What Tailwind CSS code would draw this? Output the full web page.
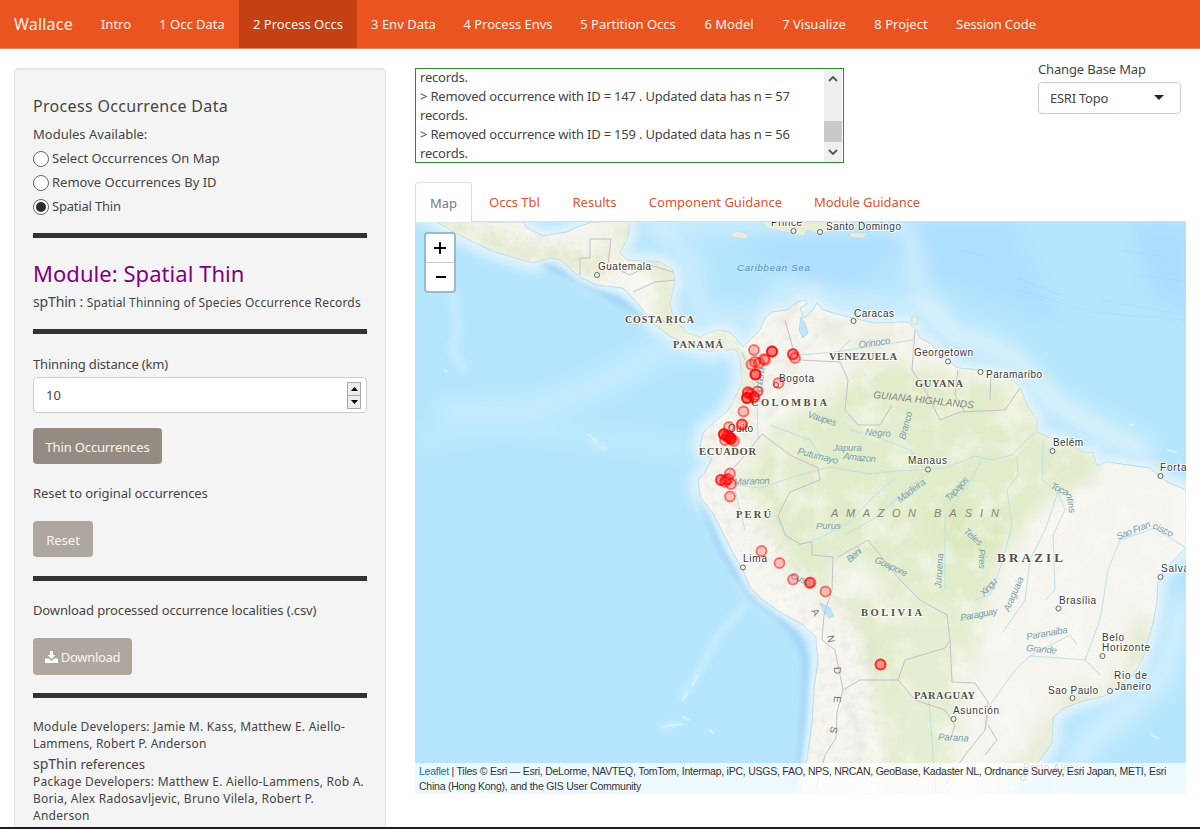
<!DOCTYPE html>
<html lang="en">
<head>
<meta charset="utf-8">
<title>Wallace</title>
<script src="https://cdn.jsdelivr.net/npm/@tailwindcss/browser@4"></script>
</head>
<body class="h-[829px] w-[1200px] overflow-hidden bg-white font-['Noto_Sans','Open_Sans',sans-serif] text-[13px] text-[#444]">
<div class="flex h-[829px] flex-col overflow-hidden border-b-2 border-[#1d1a20]">
<nav class="flex h-[49px] shrink-0 items-stretch border-b border-[#e5835d] bg-[#e95420] text-center leading-[49px] whitespace-nowrap text-[#fff1ea]">
  <a class="w-[87px] pl-[14px] text-left text-[16px] tracking-[0.2px]">Wallace</a>
  <a class="w-[58px]">Intro</a>
  <a class="w-[94px]">1 Occ Data</a>
  <a class="w-[118px] bg-[#c34113]">2 Process Occs</a>
  <a class="w-[93px]">3 Env Data</a>
  <a class="w-[116px]">4 Process Envs</a>
  <a class="w-[124px]">5 Partition Occs</a>
  <a class="w-[78px]">6 Model</a>
  <a class="w-[92px]">7 Visualize</a>
  <a class="w-[82px]">8 Project</a>
  <a class="w-[108px] tracking-[-0.1px]">Session Code</a>
</nav>
<main class="flex min-h-0 flex-1 pl-[14px]">
  <aside class="mt-[19px] w-[372px] shrink-0 overflow-hidden rounded-t border border-b-0 border-[#e3e3e3] bg-[#f4f4f4] px-[18px] pt-[27px] whitespace-nowrap shadow-[inset_0_1px_1px_rgba(0,0,0,0.05)]">
    <h4 class="h-5 text-[16px] leading-[21px] tracking-[0.32px]">Process Occurrence Data</h4>
    <div class="mt-[6px] h-6 leading-6">Modules Available:</div>
    <label class="flex h-6 items-center gap-[3px]"><span class="mt-px h-4 w-4 rounded-full border border-[#666] bg-white"></span><span class="pt-px">Select Occurrences On Map</span></label>
    <label class="flex h-6 items-center gap-[3px]"><span class="mt-px h-4 w-4 rounded-full border border-[#666] bg-white"></span><span class="pt-px">Remove Occurrences By ID</span></label>
    <label class="flex h-6 items-center gap-[3px]"><span class="mt-px flex h-4 w-4 items-center justify-center rounded-full border border-[#666] bg-white"><span class="h-[10px] w-[10px] rounded-full bg-[#2d2d2d]"></span></span><span class="pt-px tracking-[-0.2px]">Spatial Thin</span></label>
    <div class="mt-[15px] h-[5px] bg-[#333]"></div>
    <h3 class="mt-[22px] h-[27px] text-[22px] leading-[26px] tracking-[0.05px] text-[#800080]">Module: Spatial Thin</h3>
    <div class="mt-[5px] h-5 leading-5"><span class="text-[14px] tracking-[-0.15px]">spThin : </span><span class="text-[12px] tracking-[0.16px]">Spatial Thinning of Species Occurrence Records</span></div>
    <div class="mt-[17px] h-[5px] bg-[#333]"></div>
    <div class="mt-5 h-5 leading-5 tracking-[-0.18px]">Thinning distance (km)</div>
    <div class="mt-[3px] flex h-[36px] items-center justify-between rounded border border-[#ccc] bg-white pt-px pr-[5px] pl-[12px]">
      <span>10</span>
      <span class="flex h-[27px] w-[14px] flex-col border border-[#aaa] bg-[#ececec]">
        <span class="flex flex-1 items-center justify-center border-b border-[#aaa]"><svg width="7" height="4"><path d="M0 4 3.500 0 7 4z"/></svg></span>
        <span class="flex flex-1 items-center justify-center"><svg width="7" height="4"><path d="M0 0h7L3.500 4z"/></svg></span>
      </span>
    </div>
    <div class="mt-[15px] flex h-[36px] w-[129px] items-center justify-center rounded bg-[#948c82] pt-[3px] tracking-[-0.15px] text-[#f8f5ef]">Thin Occurrences</div>
    <div class="mt-5 h-5 leading-[19px] tracking-[-0.08px]">Reset to original occurrences</div>
    <div class="mt-[17px] flex h-[36px] w-[60px] items-center justify-center rounded bg-[#aea79f] pt-[3px] text-[#f8f5ef]">Reset</div>
    <div class="mt-[19px] h-[5px] bg-[#333]"></div>
    <div class="mt-5 h-5 leading-[19px] tracking-[-0.12px]">Download processed occurrence localities (.csv)</div>
    <div class="mt-[17px] flex h-[37px] w-[99px] items-center justify-center gap-[3px] rounded bg-[#aea79f] pt-[3px] tracking-[-0.3px] text-[#f8f5ef]"><svg class="-mt-[3px]" width="13" height="12" viewBox="0 0 13 12" fill="#fff"><path d="M5 0h3v4h2.500L6.500 8 2.500 4H5zM0 7.500h3.800L6.500 10l2.700-2.500H13V12H0z"/></svg>Download</div>
    <div class="mt-[18px] h-[5px] bg-[#333]"></div>
    <div class="mt-5 text-[12px] leading-[17.300px]"><span class="tracking-[0.24px]">Module Developers: Jamie M. Kass, Matthew E. Aiello-</span><br><span class="tracking-[0.14px]">Lammens, Robert P. Anderson</span></div>
    <div class="h-[20px] leading-[21px]"><span class="text-[14px]">spThin</span> references</div>
    <div class="text-[12px] leading-[17.300px] tracking-[0.24px]">Package Developers: Matthew E. Aiello-Lammens, Rob A.<br>Boria, Alex Radosavljevic, Bruno Vilela, Robert P.<br>Anderson</div>
  </aside>
  <section class="ml-[29px] flex w-[771px] flex-col whitespace-nowrap">
    <div class="flex h-[133px] shrink-0 items-start justify-between">
      <div class="mt-[19px] flex h-[95px] w-[429px] justify-between overflow-hidden border border-[#2a8a2a] pl-[4px]">
        <div class="-mt-px leading-[19px] tracking-[-0.2px]">records.<br>&gt; Removed occurrence with ID = 147 . Updated data has n = 57<br>records.<br>&gt; Removed occurrence with ID = 159 . Updated data has n = 56<br>records.</div>
        <div class="mr-px flex w-[18px] flex-col items-center bg-[#efefef]">
          <svg class="mt-[6px]" width="10" height="7" fill="none" stroke="#555" stroke-width="1.800"><path d="M1 6 5 2l4 4"/></svg>
          <span class="mt-[39px] h-[21px] w-[18px] bg-[#c9c9c9]"></span>
          <svg class="mt-[7px]" width="10" height="7" fill="none" stroke="#555" stroke-width="1.800"><path d="m1 1 4 4 4-4"/></svg>
        </div>
      </div>
      <div class="mt-[10px] w-[148px]">
        <div class="h-5 leading-5 tracking-[-0.15px]">Change Base Map</div>
        <div class="mt-[3px] flex h-[32px] w-[143px] items-center justify-between rounded border border-[#ccc] pt-px pr-[16px] pl-[11px]"><span class="pt-px tracking-[-0.25px]">ESRI Topo</span><svg class="-mt-[2px]" width="10" height="5"><path fill="#222" d="M0 0h10L5 5z"/></svg></div>
      </div>
    </div>
    <div class="flex h-[40px] shrink-0 border-b border-[#ddd] text-center leading-[41px] text-[#e0532a]">
      <a class="h-[40px] w-[57px] rounded-t border border-b-0 border-[#ddd] bg-white leading-[40px] text-[#777]">Map</a>
      <a class="w-[85px]">Occs Tbl</a>
      <a class="w-[75px]">Results</a>
      <a class="w-[167px]">Component Guidance</a>
      <a class="w-[136px] tracking-[-0.1px]">Module Guidance</a>
    </div>
    <div class="relative h-[572px] shrink-0 overflow-hidden">
      <svg class="block" width="771" height="572" viewBox="415 222 771 572" font-family="'Liberation Sans',sans-serif">
        <defs>
          <path id="land" d="M437 222 460 235 490 250 515 258 533 263 550 258 560 260 580 277 597 285 623 288 633 298 643 310 653 323 670 336 680 341 693 347 710 352 718 346 727 350 735 349 740 358 742 382 735 398 727 412 717 420 703 433 700 447 705 455 712 458 705 472 698 480 700 497 713 513 723 533 733 553 743 570 750 587 763 600 777 610 803 625 816 637 818 660 814 690 812 723 807 760 800 794H1000L1007 787 1040 760 1052 743 1053 718 1064 708 1080 702 1107 695 1133 675 1143 657 1153 623 1157 600 1158 580 1167 567 1186 547V490L1167 482 1150 468 1107 462 1097 466 1093 453 1083 452 1067 443 1048 437 1037 432 1037 420 1027 405 1020 387 1007 375 980 370 958 368 945 358 930 343 920 338 917 330 907 322 873 323 853 318 840 315 823 310 817 303 812 311 804 318 800 308 807 304 805 300 797 302 787 310 772 312 765 318 760 330 752 338 743 347 738 340 730 332 717 330 700 337 687 333 673 318 670 302 675 282 673 270 660 262 627 260 620 253 628 237 630 222H592L577 227 567 232 543 236 527 228 523 222Z"/>
          <clipPath id="c"><use href="#land"/></clipPath>
          <filter id="b3" x="-20%" y="-20%" width="140%" height="140%"><feGaussianBlur stdDeviation="3"/></filter>
          <filter id="b8" x="-50%" y="-50%" width="200%" height="200%"><feGaussianBlur stdDeviation="9"/></filter>
          <filter id="grain" x="0" y="0" width="100%" height="100%"><feTurbulence type="fractalNoise" baseFrequency=".035" numOctaves="5" seed="4"/><feColorMatrix values="0 0 0 0 .98  0 0 0 0 .975  0 0 0 0 .94  2.800 0 0 0 -1.250"/></filter>
          <filter id="relief" x="0" y="0" width="100%" height="100%"><feTurbulence type="fractalNoise" baseFrequency=".12" numOctaves="3" seed="8"/><feColorMatrix values="0 0 0 0 .66  0 0 0 0 .66  0 0 0 0 .62  2.500 0 0 0 -1.200"/></filter>
        </defs>
        <rect x="415" y="222" width="771" height="572" fill="#b6e6fd"/>
        <g filter="url(#b8)">
          <path d="M735 240 900 222H1010L1060 320 960 290 890 250 850 292 800 282Z" fill="#addffe"/>
          <path d="M1130 222h60v100l-40-30z" fill="#abddfe"/>
          <path d="M650 222 900 222 915 250 920 310 850 300 790 285 755 320 700 315 690 260Z" fill="none" stroke="#d3eefc" stroke-width="14"/>
          <path d="M745 350 670 345 600 385 530 410 440 412" fill="none" stroke="#c9edfd" stroke-width="18"/>
          <path d="M700 450 620 440 500 425 415 440" fill="none" stroke="#beE9fd" stroke-width="12"/>
          <path d="M1186 600 1160 680 1090 740 1060 794" fill="none" stroke="#cfeefd" stroke-width="26"/>
          <path d="M925 300 950 335 990 345 1020 365 1050 400 1100 430 1150 455" fill="none" stroke="#d9f1fb" stroke-width="24"/>
        </g>
        <use href="#land" fill="none" stroke="#d0edfc" stroke-width="22" filter="url(#b3)"/>
        <path d="M540 260C580 285 610 292 650 320M700 492C710 530 730 570 755 600C790 625 804 640 806 665C806 700 803 740 795 794" fill="none" stroke="#9ed2f7" stroke-width="7" filter="url(#b3)"/>
        <use href="#land" fill="none" stroke="#e2f4fb" stroke-width="8" filter="url(#b3)"/>
        <g fill="none" stroke="#d0effc" stroke-width="2.500" opacity=".75" filter="url(#b3)">
          <path d="M745 605 715 640 700 670 680 700M680 722 660 727M452 290 458 330 452 350 465 370M590 440l15 8" stroke-width="6"/>
        </g>
        <g fill="none" stroke="#9fd1f2" opacity=".3"><path d="M1015 277l45 18M1020 290l70 22 96 8M1100 300l86 15M960 250l30 8M1120 250l50 8M1140 275l40 6"/></g>
        <g fill="none" stroke="#d8f2fd" stroke-width="2" stroke-linecap="round" opacity=".8"><path d="M588 434l8 8M600 447l6 1M683 700l5-8M692 686l6-11M662 727l20-3M683 717l6 3M709 730l4 3M445 371h1M1168 450l8 2M1130 425h3M1150 735l8 3"/></g>
        <use href="#land" fill="#f5f4ee" stroke="#b9dcea" stroke-width="1"/>
        <g clip-path="url(#c)">
          <g filter="url(#b8)">
            <path d="M770 430 830 395 870 360 940 372 1020 385 1045 440 1100 450 1095 480 1045 500 1000 560 985 610 900 600 860 560 800 570 770 530 740 480Z" fill="#e1ecca"/>
            <path d="M850 600 920 590 985 620 960 700 950 794 885 794 875 700Z" fill="#e4eed0"/>
            <path d="M735 350 755 345 752 420 735 440Z" fill="#e3ecd0"/>
            <path d="M775 490 800 560 850 600 880 640 895 690" fill="none" stroke="#dfebc6" stroke-width="16"/>
            <path d="M1055 720 1035 760 985 794M1145 620 1130 680 1060 705" fill="none" stroke="#dfe9cc" stroke-width="16"/>
            <path d="M437 222 530 255 600 265 620 225 670 275 665 320 730 342" fill="none" stroke="#dfeac8" stroke-width="16"/>
            <path d="M800 325 900 330 930 350 850 350Z" fill="#eceddd"/>
            <path d="M935 500 1000 510 1000 560 940 545Z" fill="#dbe9bd"/>
          </g>
          <rect x="415" y="222" width="771" height="572" filter="url(#grain)" opacity=".5"/>
          <clipPath id="andes"><path d="M437 222 530 262 600 280 620 250 560 240 500 225ZM735 340 800 300 835 320 790 370 765 400 748 460 760 520 830 590 865 620 880 700 870 794H800L818 650 700 500V440Z"/></clipPath>
          <g clip-path="url(#andes)"><rect x="415" y="222" width="480" height="572" filter="url(#relief)" opacity=".3"/></g>
        </g>
        <g fill="#e9eed9" stroke="#c0dce4" stroke-width=".6"><path d="M760 222 770 229 790 233 803 236 807 230 820 234 838 229 842 222ZM730 234 738 231 749 235 745 239 734 237ZM850 233 866 233 864 238 850 237ZM912 317l6-1-1 9-6-2z"/></g>
        <path d="M801 317 799 330 803 338 808 333 805 324ZM820 603 830 608 834 616 829 618 823 611Z" fill="#bfe6f7" stroke="#a5d4ea" stroke-width=".7"/>
        <g fill="none" stroke="#bfe1e6" stroke-width="1">
          <path d="M735 485 760 488 790 478 810 472 830 467 870 474 895 471 920 470 945 468 975 456 990 460 1012 455 1035 432M850 430 880 438 910 450 925 467M770 425 810 440 820 455M895 478 870 500 850 522 820 538 798 545M925 475 900 495 880 515 845 535M982 460 965 490 945 515 945 590M1017 456 1018 475 1007 490 1012 525 1003 560 990 595 975 600M1043 440 1042 480 1058 492 1045 530 1030 560 1025 600 1003 632M1058 492 1065 510 1053 535 1055 590 1045 600M1186 548 1155 528 1120 540 1108 570 1100 620 1085 660 1060 658 1030 656 1015 670 990 705 985 730M1030 656 1070 635 1077 645M1085 660 1100 675M750 370 757 400 758 440M800 355 835 352 880 345 913 340M928 690 932 740 936 794M960 620 990 615M735 490 745 530M790 540 775 515M830 360 850 340"/>
        </g>
        <g fill="none" stroke="#cbbdd0" stroke-width="1">
          <path d="M785 320 792 345 800 360 840 362 848 380 845 410 858 425 880 425 892 405M762 434 745 455 727 475M762 434 790 455 818 468 820 480 790 492 778 515 785 535 800 544 812 542 812 555 833 557 832 590 824 615 822 640 835 650 843 690 860 680 885 680 898 680 905 660 945 648 950 640 947 615 920 600 900 580 868 540 838 557M843 690 837 712 836 738 825 755 815 794M898 680 915 700 945 710 955 725 950 740M950 640 952 682 975 683 988 702 985 730 965 755 945 785M988 725 997 740 985 755M915 330 912 370 925 390 940 420 960 412 1005 410 1020 388M958 370 955 395 965 412M991 375 990 400M611 239H590V258H580V275M611 239 608 265 630 275 650 265 673 272M633 292 655 282 675 280M657 318 672 325M742 352 745 360"/>
        </g>
        <g fill="none" stroke="#c5c4b8" stroke-width="2" opacity=".55" filter="url(#b3)"><path d="M765 420 790 385 798 350M778 328 795 305M825 330 850 320M845 700 862 740 850 780M870 640 876 690"/></g>
        <g font-style="italic" font-size="9.500" fill="#7ba0ae" letter-spacing=".3">
          <text x="737" y="271" textLength="73" fill="#5f93b5">Caribbean Sea</text>
          <text transform="translate(859 348) rotate(-8)" textLength="32">Orinoco</text>
          <text transform="translate(807 417) rotate(18)" textLength="30">Vaupes</text>
          <text transform="translate(865 435) rotate(4)" textLength="26">Negro</text>
          <text transform="translate(905 440) rotate(-75)" textLength="29">Branco</text>
          <text x="833" y="451" textLength="29">Japura</text>
          <text transform="translate(797 454) rotate(14)" textLength="42">Putumayo</text>
          <text transform="translate(843 459) rotate(6)" textLength="33">Amazon</text>
          <text transform="translate(734 485) rotate(-2)" textLength="36">Maranon</text>
          <text transform="translate(900 503) rotate(-37)" textLength="33">Madeira</text>
          <text transform="translate(949 502) rotate(-47)" textLength="30">Tapajos</text>
          <text x="816" y="529" textLength="25">Purus</text>
          <text transform="translate(850 563) rotate(-42)" textLength="17">Beni</text>
          <text transform="translate(874 562) rotate(25)" textLength="35">Guapore</text>
          <text transform="translate(963 532) rotate(42)" textLength="22">Teles</text>
          <text transform="translate(979 549) rotate(90)" textLength="20">Pires</text>
          <text transform="translate(941 588) rotate(-86)" textLength="35">Juruena</text>
          <text transform="translate(984 597) rotate(-48)" textLength="21">Xingu</text>
          <text transform="translate(1050 488) rotate(25)" textLength="19">Toca</text>
          <text transform="translate(1066 494) rotate(80)" textLength="20">ntins</text>
          <text transform="translate(1118 540) rotate(-22)" textLength="36">Sao Fran</text>
          <text transform="translate(1152 528) rotate(25)" textLength="22">cisco</text>
          <text transform="translate(961 621) rotate(-11)" textLength="38">Paraguay</text>
          <text transform="translate(1009 612) rotate(-66)" textLength="37">Araguaia</text>
          <text transform="translate(1027 640) rotate(-10)" textLength="42">Paranaiba</text>
          <text transform="translate(1026 651) rotate(5)" textLength="31">Grande</text>
          <text transform="translate(938 740) rotate(3)" textLength="31">Parana</text>
          <text transform="translate(760 402) rotate(-82)" textLength="35" fill="#8fb0b8">Magdalena</text>
          <text transform="translate(790 578) rotate(22)" textLength="25">Cusco</text>
        </g>
        <g font-style="italic" fill="#84867b" font-size="10">
          <text transform="translate(873 398) rotate(6)" textLength="101">GUIANA HIGHLANDS</text>
          <text x="831" y="517" textLength="85" font-size="11">AMAZON</text><text x="934" y="517" textLength="65" font-size="11">BASIN</text>
        </g>
        <g fill="#777" font-size="10"><text transform="translate(811 611) rotate(60)">A</text><text transform="translate(827 636) rotate(80)">N</text><text transform="translate(834 667) rotate(88)">D</text><text transform="translate(834 696) rotate(92)">E</text><text transform="translate(831 726) rotate(100)">S</text></g>
        <g font-family="'Liberation Serif',serif" fill="#505050" stroke="#fafaf2" stroke-width="2" paint-order="stroke" font-size="10.500" font-weight="bold">
          <text x="625" y="323" textLength="69" font-size="10">COSTA RICA</text>
          <text x="673" y="348" textLength="50">PANAMÁ</text>
          <text x="751" y="406" textLength="76">COLOMBIA</text>
          <text x="829" y="360" textLength="68">VENEZUELA</text>
          <text x="915" y="387" textLength="48">GUYANA</text>
          <text x="699" y="455" textLength="57">ECUADOR</text>
          <text x="736" y="518" textLength="35">PERÚ</text>
          <text x="861" y="616" textLength="61">BOLIVIA</text>
          <text x="997" y="562" textLength="66" font-size="13">BRAZIL</text>
          <text x="914" y="699" textLength="61">PARAGUAY</text>
        </g>
        <g font-size="10" fill="#383838" stroke="#fff" stroke-width="2" stroke-opacity=".8" paint-order="stroke">
          <text x="598" y="270" textLength="53">Guatemala</text><text x="771" y="226" textLength="31">Prince</text><text x="826" y="230" textLength="75">Santo Domingo</text>
          <text x="854" y="317" textLength="40">Caracas</text><text x="779" y="382" textLength="35">Bogota</text><text x="914" y="356" textLength="59">Georgetown</text>
          <text x="986" y="378" textLength="56">Paramaribo</text><text x="728" y="432" textLength="25">Quito</text><text x="908" y="464" textLength="39">Manaus</text>
          <text x="1053" y="446" textLength="30">Belém</text><text x="1160" y="471" textLength="48">Fortaleza</text><text x="743" y="562" textLength="24">Lima</text>
          <text x="1161" y="572" textLength="45">Salvador</text><text x="1059" y="604" textLength="37">Brasília</text><text x="1102" y="641" textLength="22">Belo</text>
          <text x="1102" y="651" textLength="48">Horizonte</text><text x="1114" y="679" textLength="33">Rio de</text><text x="1115" y="690" textLength="36">Janeiro</text>
          <text x="1048" y="694" textLength="50">Sao Paulo</text><text x="953" y="714" textLength="46">Asunción</text><text x="1023" y="771" textLength="62" fill="#666">Porto Alegre</text>
        </g>
        <g fill="#f7f7f2" stroke="#666" stroke-width="1">
          <circle cx="597" cy="275" r="2.500"/><circle cx="793.500" cy="231" r="2.500"/><circle cx="820" cy="232" r="2.500"/><circle cx="853.500" cy="321" r="2.500"/><circle cx="776" cy="385" r="2.500"/><circle cx="948" cy="361.500" r="2.500"/><circle cx="980.500" cy="372" r="2.500"/><circle cx="928" cy="469.500" r="2.500"/><circle cx="1052.500" cy="451" r="2.500"/><circle cx="1160.500" cy="476" r="2.500"/><circle cx="743" cy="567.500" r="2.500"/><circle cx="1160.500" cy="577" r="2.500"/><circle cx="1058.500" cy="608.500" r="2.500"/><circle cx="1102.500" cy="656" r="2.500"/><circle cx="1110" cy="691" r="2.500"/><circle cx="1072.500" cy="698" r="2.500"/><circle cx="953.500" cy="719" r="2.500"/><circle cx="1023" cy="778" r="2.500"/>
        </g>
        <g fill="#f00" fill-opacity=".2" stroke="#f00" stroke-opacity=".5" stroke-width="1.900">
          <circle cx="754" cy="350" r="5"/><circle cx="772" cy="351.500" r="5"/><circle cx="772" cy="351.500" r="5"/><circle cx="772" cy="351.500" r="5"/><circle cx="793" cy="354" r="5"/><circle cx="793" cy="354.500" r="5"/><circle cx="795" cy="358" r="5"/>
          <circle cx="751.500" cy="364.500" r="5"/><circle cx="755" cy="362" r="5"/><circle cx="759" cy="363" r="5"/><circle cx="764" cy="359" r="5"/><circle cx="765" cy="360" r="5"/><circle cx="755.500" cy="374.500" r="5"/><circle cx="755.500" cy="374.500" r="5"/><circle cx="755.500" cy="374.500" r="5"/>
          <circle cx="778.500" cy="383" r="5"/><circle cx="748" cy="392" r="5"/><circle cx="748" cy="393" r="5"/><circle cx="757.500" cy="391.500" r="5"/><circle cx="747" cy="398" r="5"/><circle cx="747" cy="398" r="5"/><circle cx="747" cy="398" r="5"/><circle cx="754" cy="397" r="5"/><circle cx="754" cy="397" r="5"/><circle cx="751" cy="394" r="5"/>
          <circle cx="743.500" cy="411.500" r="5"/><circle cx="742" cy="424.500" r="5"/><circle cx="742" cy="424.500" r="5"/><circle cx="729" cy="427" r="5"/><circle cx="724" cy="434" r="5"/><circle cx="724" cy="434" r="5"/><circle cx="724" cy="435" r="5"/><circle cx="727" cy="436" r="5"/><circle cx="728" cy="437" r="5"/><circle cx="730" cy="438" r="5"/><circle cx="730" cy="438" r="5"/><circle cx="731" cy="439" r="5"/><circle cx="731" cy="439" r="5"/><circle cx="725" cy="440" r="5"/><circle cx="734" cy="441" r="5"/>
          <circle cx="730" cy="473.500" r="5"/><circle cx="721" cy="480" r="5"/><circle cx="721" cy="480" r="5"/><circle cx="726" cy="480" r="5"/><circle cx="728" cy="479" r="5"/><circle cx="725" cy="482" r="5"/><circle cx="731" cy="484" r="5"/><circle cx="730" cy="496.500" r="5"/>
          <circle cx="761.500" cy="551" r="5"/><circle cx="779.500" cy="563" r="5"/><circle cx="793" cy="579.500" r="5"/><circle cx="809.500" cy="583" r="5"/><circle cx="810.500" cy="582.500" r="5"/><circle cx="825.500" cy="591.500" r="5"/><circle cx="880.500" cy="664.500" r="5"/><circle cx="880.500" cy="664.500" r="5"/>
        </g>
      </svg>
      <div class="absolute top-[10px] left-[9px] flex h-[61px] w-[32px] flex-col overflow-hidden rounded border-2 border-[#9db9c7] bg-white text-black">
        <span class="flex h-[29px] items-center justify-center border-b border-[#ccc]"><svg width="12" height="12" stroke="#000" stroke-width="2"><path d="M0 6h12M6 0v12"/></svg></span>
        <span class="flex h-[27px] items-center justify-center pl-px"><svg width="12" height="12" stroke="#000" stroke-width="2"><path d="M1 6h10"/></svg></span>
      </div>
      <div class="absolute bottom-0 left-0 h-[31px] w-[771px] bg-white/75 pt-px pl-[4px] font-['Liberation_Sans',sans-serif] text-[10.500px] leading-[15px] tracking-[-0.24px] text-[#333]"><span class="text-[#0078a8]">Leaflet</span> | Tiles © Esri — Esri, DeLorme, NAVTEQ, TomTom, Intermap, iPC, USGS, FAO, NPS, NRCAN, GeoBase, Kadaster NL, Ordnance Survey, Esri Japan, METI, Esri<br>China (Hong Kong), and the GIS User Community</div>
    </div>
  </section>
</main>
</div>
</body>
</html>
